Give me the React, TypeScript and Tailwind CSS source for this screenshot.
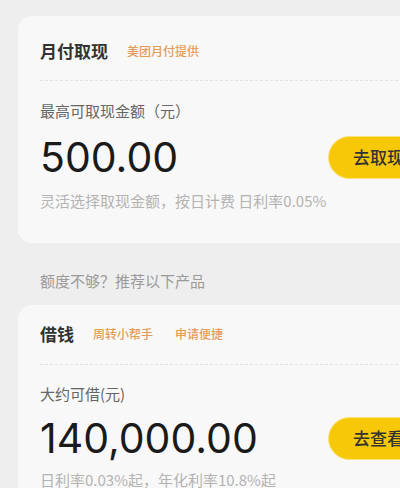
const cjk = { fontFamily: '"Noto Sans CJK SC", "Noto Sans", sans-serif' };
const num = { fontFamily: 'Inter, "Noto Sans CJK SC", sans-serif' };

function Tag({ text }: { text: string }) {
  return <span className="text-[12px] leading-[24px] font-medium text-[#e59b58]">{text}</span>;
}

function Card({
  title,
  tags,
  label,
  amount,
  action,
  desc,
  pad,
}: {
  title: string;
  tags: string[];
  label: string;
  amount: string;
  action: string;
  desc: string;
  pad: { top: string; line: string; label: string; amount: string; desc: string; bottom: string };
}) {
  return (
    <div className={`w-[430px] rounded-[14px] bg-[#f8f8f8] pl-[22px] ${pad.top} ${pad.bottom}`}>
      <div className="flex items-center">
        <span className="text-[17px] leading-[24px] font-bold text-[#333]">{title}</span>
        <div className="ml-[19px] flex gap-[22px]">
          {tags.map((t) => (
            <Tag key={t} text={t} />
          ))}
        </div>
      </div>
      <div className={`border-t border-dashed border-[#e2e2e2] ${pad.line}`} />
      <div className={`text-[15px] leading-[20px] text-[#666] ${pad.label}`}>{label}</div>
      <div className={`flex items-center justify-between ${pad.amount}`}>
        <span className="text-[41px] leading-[48px] text-[#1a1a1a]" style={num}>
          {amount}
        </span>
        <button className="flex h-[43px] w-[120px] items-center rounded-full border border-[#fbe27a] bg-[#f7c808] pl-[24px] text-[17px] font-medium text-[#333]">
          {action}
        </button>
      </div>
      <div className={`text-[15px] leading-[20px] text-[#b3b3b3] ${pad.desc}`}>{desc}</div>
    </div>
  );
}

export default function App() {
  return (
    <div className="h-[488px] w-[400px] overflow-hidden bg-[#eeeeee] pl-[18px] pt-[16px]" style={cjk}>
      <Card
        title="月付取现"
        tags={["美团月付提供"]}
        label="最高可取现金额（元）"
        amount="500.00"
        action="去取现"
        desc="灵活选择取现金额，按日计费 日利率0.05%"
        pad={{ top: "pt-[23px]", line: "mt-[17px]", label: "mt-[20px]", amount: "mt-[12px]", desc: "mt-[10px]", bottom: "pb-[32px]" }}
      />
      <div className="pl-[22px] pt-[28px] pb-[14px] text-[15px] leading-[20px] text-[#9a9a9a]">额度不够？推荐以下产品</div>
      <Card
        title="借钱"
        tags={["周转小帮手", "申请便捷"]}
        label="大约可借(元)"
        amount="140,000.00"
        action="去查看"
        desc="日利率0.03%起，年化利率10.8%起"
        pad={{ top: "pt-[17px]", line: "mt-[18px]", label: "mt-[19px]", amount: "mt-[10px]", desc: "mt-[8px]", bottom: "pb-[32px]" }}
      />
    </div>
  );
}
